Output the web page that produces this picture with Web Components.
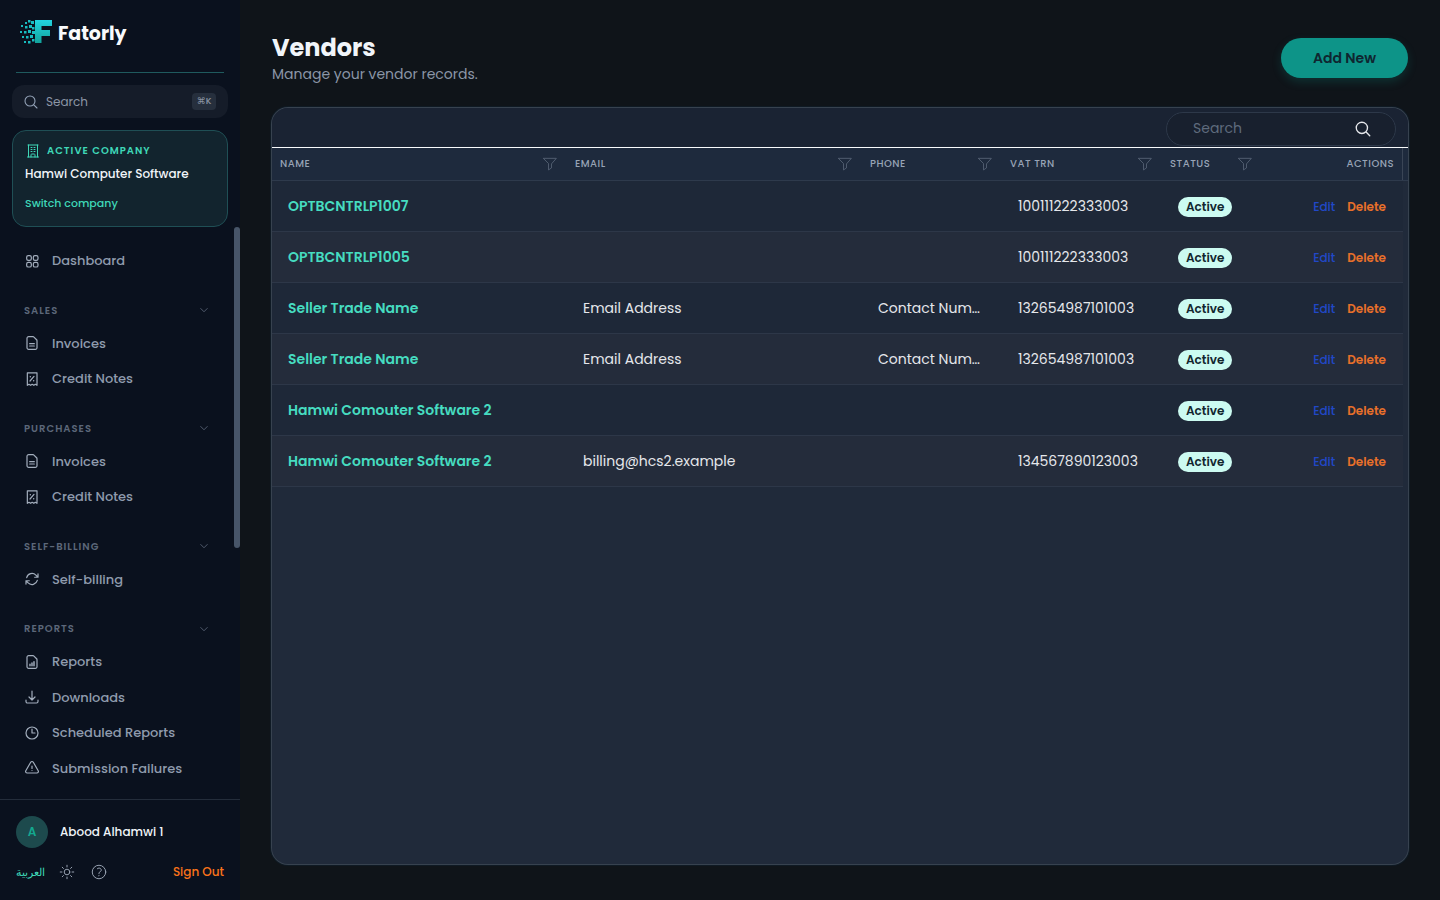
<!doctype html><html lang="en"><head><meta charset="utf-8"><title>Vendors</title><style>
html,body{margin:0;height:100%;overflow:hidden;background:#0f1419}
body{font-family:"Poppins","Noto Sans",sans-serif;color:#e5e7eb}
</style></head><body>
<fa-app>
  <fa-sidebar slot="sidebar"></fa-sidebar>
  <fa-page-header slot="main" title="Vendors" subtitle="Manage your vendor records." action="Add New"></fa-page-header>
  <fa-vendor-table slot="main"></fa-vendor-table>
</fa-app>
<script>
const IC={
 grid:'<rect x="4" y="4" width="7" height="7" rx="2.4"/><rect x="14" y="4" width="7" height="7" rx="2.4"/><rect x="4" y="14" width="7" height="7" rx="2.4"/><rect x="14" y="14" width="7" height="7" rx="2.4"/>',
 doc:'<path d="M7 2.5h6.5a2 2 0 0 1 1.4.6l4 4a2 2 0 0 1 .6 1.4V19a2.5 2.5 0 0 1-2.5 2.5H7A2.5 2.5 0 0 1 4.500 19V5A2.500 2.500 0 0 1 7 2.500z"/><path d="M8.500 13h7M8.500 16.500h7"/>',
 receipt:'<path d="M5 2.800h14.500V21.500l-2.400-1.600-2.400 1.600-2.400-1.600-2.400 1.600-2.400-1.600L5 21.500z"/><path d="M9 15l6-7"/><path d="M9.500 8.500h.01M14.500 14.500h.01" stroke-width="2.200"/>',
 sync:'<path d="M16.023 9.348h4.992v-.001M2.985 19.644v-4.992m0 0h4.992m-4.993 0l3.181 3.183a8.25 8.25 0 0013.803-3.7M4.031 9.865a8.25 8.25 0 0113.803-3.7l3.181 3.182m0-4.991v4.99"/>',
 report:'<path d="M7 2.500h6.500a2 2 0 0 1 1.400.6l4 4a2 2 0 0 1 .6 1.400V19a2.500 2.500 0 0 1-2.500 2.500H7A2.500 2.500 0 0 1 4.500 19V5A2.500 2.500 0 0 1 7 2.500z"/><path d="M9 17.500l0-2M12 17.500v-4M15 17.500v-6" stroke-width="2.200"/>',
 down:'<path d="M3 16.500v2.250A2.250 2.250 0 005.250 21h13.500A2.250 2.250 0 0021 18.750V16.500M16.500 12L12 16.500m0 0L7.500 12m4.500 4.500V3"/>',
 clock:'<path d="M12 6v6h4.500m4.500 0a9 9 0 11-18 0 9 9 0 0118 0z"/>',
 warn:'<path d="M12 9v3.750m-9.303 3.376c-.866 1.500.217 3.374 1.948 3.374h14.710c1.730 0 2.813-1.874 1.948-3.374L13.949 3.378c-.866-1.500-3.032-1.500-3.898 0L2.697 16.126zM12 15.750h.007v.008H12v-.008z"/>',
 building:'<path d="M3.750 21h16.500M4.500 3h15M5.250 3v18m13.500-18v18M9 6.750h1.500m-1.500 3h1.500m-1.500 3h1.500m3-6H15m-1.500 3H15m-1.500 3H15M9 21v-3.375c0-.621.504-1.125 1.125-1.125h3.750c.621 0 1.125.504 1.125 1.125V21"/>',
 sun:'<path d="M12 3v2.250m6.364.386l-1.591 1.591M21 12h-2.250m-.386 6.364l-1.591-1.591M12 18.750V21m-4.773-4.227l-1.591 1.591M5.250 12H3m4.227-4.773L5.636 5.636M15.750 12a3.750 3.750 0 11-7.500 0 3.750 3.750 0 017.500 0z"/>',
 help:'<path d="M9.879 7.519c1.171-1.025 3.071-1.025 4.242 0 1.172 1.025 1.172 2.687 0 3.712-.203.179-.43.326-.67.442-.745.361-1.450.999-1.450 1.827v.750M21 12a9 9 0 11-18 0 9 9 0 0118 0zm-9 5.250h.008v.008H12v-.008z"/>',
 search:'<path d="M21 21l-5.197-5.197m0 0A7.500 7.500 0 105.196 5.196a7.500 7.500 0 0010.607 10.607z"/>',
 funnel:'<path d="M2.500 3.500h19l-7.300 8.400v6l-4.400 3v-9z"/>',
 chev:'<path d="M5.500 9l6.500 6.500L18.500 9"/>'
};
function icon(n,s,w,c){return `<svg width="${s}" height="${s}" viewBox="0 0 24 24" fill="none" stroke="${c||'currentColor'}" stroke-width="${w||1.5}" stroke-linecap="round" stroke-linejoin="round" style="display:block;flex:none">${IC[n]}</svg>`}
class Base extends HTMLElement{render(h){(this.shadowRoot||this.attachShadow({mode:'open'})).innerHTML=h}}

class FaApp extends Base{connectedCallback(){this.render(`<style>
:host{display:flex;width:1440px;height:900px;background:#0f1419}
.m{flex:1;min-width:0;display:flex;flex-direction:column;padding:32px 32px 36px}
</style><slot name="sidebar"></slot><div class="m"><slot name="main"></slot></div>`)}}

class FaLogo extends Base{connectedCallback(){
 const dots=[[28,20,2.500],[25,22,2],[31,21,3],[21,25,2],[25,26,2.500],[29,25,3],[32,27,2.500],[20,31,2],[24,31,2.500],[28,30,3],[32,31,3],[22,36,2],[26,36,2.500],[30,35,3],[24,41,2],[28,41,2.500],[32,39,2.500]];
 this.render(`<style>:host{display:flex;align-items:center;height:46px}
 svg{display:block;flex:none}span{font-size:19px;font-weight:700;color:#f8fafc;line-height:30px;margin-left:-2px;position:relative;top:1px;letter-spacing:-.05px}</style>
 <svg width="44" height="46" viewBox="16 10 44 46"><defs><linearGradient id="g" x1="0" y1="0" x2="0" y2="1"><stop offset="0" stop-color="#22d3e0"/><stop offset="1" stop-color="#12a39c"/></linearGradient></defs>
 ${dots.map(d=>`<rect x="${d[0]}" y="${d[1]}" width="${d[2]}" height="${d[2]}" fill="#18bcc0"/>`).join('')}
 <path d="M35 20h17v6H41.500v4H50v6h-8.500v7H35z" fill="url(#g)"/></svg><span>Fatorly</span>`)}}

class FaSideSearch extends Base{connectedCallback(){this.render(`<style>
:host{display:flex;align-items:center;height:33px;margin:0 12px;padding:0 12px 0 11px;border-radius:12px;background:#151c29;color:#94a3b8;box-sizing:border-box}
span{font-size:12px;margin-left:7px;flex:1;color:#8b95a5}
kbd{font:500 9px "Poppins","DejaVu Sans",sans-serif;background:#262f3d;color:#8b95a5;border-radius:4px;width:24px;height:17px;display:flex;align-items:center;justify-content:center}
</style>${icon('search',16,1.600)}<span>Search</span><kbd>⌘K</kbd>`)}}

class FaCompany extends Base{connectedCallback(){this.render(`<style>
:host{display:block;margin:12px 12px 0;height:97px;box-sizing:border-box;padding:12px 12px 0;border:1px solid #1f4f55;border-radius:14px;background:#12242e}
.l{display:flex;align-items:center;gap:6px;color:#3fd8b8;font-size:10px;font-weight:600;letter-spacing:1px;line-height:16px}
.n{font-size:12px;font-weight:500;color:#f1f5f9;line-height:18px;margin-top:6px}
.s{font-size:11px;font-weight:500;color:#3fd8b8;line-height:16px;margin-top:12px}
</style><div class="l">${icon('building',16,1.500)}ACTIVE COMPANY</div><div class="n">Hamwi Computer Software</div><div class="s">Switch company</div>`)}}

class FaNavItem extends Base{connectedCallback(){this.render(`<style>
:host{display:flex;align-items:center;height:35.500px;padding-left:24px;gap:12px;font-size:13px;font-weight:500;color:#8f9bad}
svg{color:#a3aebd}
span{position:relative;top:.5px}
</style>${icon(this.getAttribute('icon'),16,1.800)}<span><slot></slot></span>`)}}

class FaNavSection extends Base{connectedCallback(){this.render(`<style>
:host{display:block;margin-top:16.500px}
.h{display:flex;align-items:center;justify-content:space-between;height:30.500px;padding:0 30px 0 24px;font-size:10px;font-weight:600;letter-spacing:1px;color:#5c6779}
.h span{position:relative;top:.5px}
svg{color:#677285}
</style><div class="h"><span>${this.getAttribute('label')}</span>${icon('chev',12,1.500)}</div><slot></slot>`)}}

class FaSidebar extends Base{connectedCallback(){this.render(`<style>
:host{display:flex;flex-direction:column;width:240px;height:900px;flex:none;background:#0a111e;box-sizing:border-box}
.top{padding:10px 0 0 16px;height:36px}
.rule{height:1px;background:#1f5a5e;margin:26px 16px 12px}
.nav{flex:1;min-height:0;position:relative;padding-top:16px;overflow:hidden}
.thumb{position:absolute;right:0;top:0;width:6px;height:321px;border-radius:3px;background:#475569}
.foot{flex:none;height:101px;border-top:1px solid #242d3b;box-sizing:border-box;padding:16px 16px 0}
.u{display:flex;align-items:center;gap:12px;font-size:12px;font-weight:500;color:#f1f5f9}
.a{width:32px;height:32px;border-radius:50%;background:#1d4a4d;color:#14a88f;display:flex;align-items:center;justify-content:center;font-size:12px;font-weight:600}
.b{display:flex;align-items:center;margin-top:12px;height:24px;font-size:12px}
.ar{color:#3fd8b8;font-size:11.300px;font-weight:500;width:42px}
.ic{display:flex;gap:14px;color:#9aa5b4;flex:1}
.so{color:#f9731a;font-weight:500}
</style>
<div class="top"><fa-logo></fa-logo></div><div class="rule"></div>
<fa-side-search></fa-side-search><fa-company></fa-company>
<div class="nav"><div class="thumb"></div>
<fa-nav-item icon="grid">Dashboard</fa-nav-item>
<fa-nav-section label="SALES"><fa-nav-item icon="doc">Invoices</fa-nav-item><fa-nav-item icon="receipt">Credit Notes</fa-nav-item></fa-nav-section>
<fa-nav-section label="PURCHASES"><fa-nav-item icon="doc">Invoices</fa-nav-item><fa-nav-item icon="receipt">Credit Notes</fa-nav-item></fa-nav-section>
<fa-nav-section label="SELF-BILLING"><fa-nav-item icon="sync">Self-billing</fa-nav-item></fa-nav-section>
<fa-nav-section label="REPORTS"><fa-nav-item icon="report">Reports</fa-nav-item><fa-nav-item icon="down">Downloads</fa-nav-item><fa-nav-item icon="clock">Scheduled Reports</fa-nav-item><fa-nav-item icon="warn">Submission Failures</fa-nav-item></fa-nav-section>
</div>
<div class="foot"><div class="u"><div class="a">A</div><span>Abood Alhamwi 1</span></div>
<div class="b"><span class="ar" lang="ar">العربية</span><div class="ic">${icon('sun',18,1.300)}${icon('help',18,1.300)}</div><span class="so">Sign Out</span></div></div>`)}}

class FaPageHeader extends Base{connectedCallback(){this.render(`<style>
:host{display:flex;align-items:center;justify-content:space-between;height:52px;flex:none;margin-bottom:24px}
h1{margin:0;font-size:24px;line-height:32px;font-weight:700;color:#f1f5f9}
p{margin:0;font-size:14px;line-height:20px;color:#8b96a7}
button{font:600 14px "Poppins",sans-serif;height:40px;width:127px;border:0;border-radius:20px;background:#0d9488;color:#0f2630;box-shadow:0 4px 10px rgba(13,148,136,.22)}
</style><div><h1>${this.getAttribute('title')}</h1><p>${this.getAttribute('subtitle')}</p></div><button>${this.getAttribute('action')}</button>`)}}

class FaBadge extends Base{connectedCallback(){this.render(`<style>
:host{display:inline-flex;align-items:center;height:20px;padding:0 8px;border-radius:10px;background:#ccfbf1;color:#11262e;font-size:12px;font-weight:600;line-height:20px}
</style><slot></slot>`)}}

const COLS='295px 295px 140px 160px 100px 141px';
class FaVendorRow extends Base{connectedCallback(){const g=a=>this.getAttribute(a)||'';this.render(`<style>
:host{display:grid;grid-template-columns:${COLS};height:51px;box-sizing:border-box;border-bottom:1px solid #2d3748;font-size:14px;color:#e5e7eb;background:#1e2838}
:host([alt]){background:#242c3b}
.c{padding:0 16px;display:flex;align-items:center;min-width:0}
.t{white-space:nowrap;display:block;min-width:0}
.n{font-weight:600;color:#46dcc0}
.s{padding-top:1px}
.x{justify-content:flex-end;gap:12px;padding:1px 17px 0 0;font-size:12px;font-weight:500}
.e{color:#2148c8}.d{color:#e8702a;font-weight:600}
</style><div class="c n"><span class="t">${g('name')}</span></div><div class="c"><span class="t">${g('email')}</span></div><div class="c"><span class="t">${g('phone')}</span></div><div class="c"><span class="t">${g('vat')}</span></div><div class="c s"><fa-badge>Active</fa-badge></div><div class="c x"><span class="e">Edit</span><span class="d">Delete</span></div>`)}}

class FaHeadCell extends Base{connectedCallback(){this.render(`<style>
:host{display:flex;align-items:center;justify-content:space-between;padding:0 9px 0 8px;font-size:10px;font-weight:500;letter-spacing:.5px;color:#98a4b6;min-width:0}
svg{color:#5d697c}
</style><span><slot></slot></span>${icon('funnel',16,1.200)}`)}}

class FaVendorTable extends Base{connectedCallback(){
 const R=[['OPTBCNTRLP1007','','','100111222333003'],['OPTBCNTRLP1005','','','100111222333003'],['Seller Trade Name','Email Address','Contact Num…','132654987101003'],['Seller Trade Name','Email Address','Contact Num…','132654987101003'],['Hamwi Comouter Software 2','','',''],['Hamwi Comouter Software 2','billing@hcs2.example','','134567890123003']];
 this.render(`<style>
:host{display:flex;flex-direction:column;flex:1;min-height:0;border-radius:16px;background:#202a3a;box-shadow:0 0 0 1px #37424f,0 0 0 2px #0f1a24;overflow:hidden}
.tb{flex:none;height:39px;background:#1a2333;display:flex;justify-content:flex-end;padding-right:12px;box-sizing:border-box}
.s{width:230px;height:34px;margin-top:4px;border:1px solid #2d3849;border-radius:17px;display:flex;align-items:center;justify-content:space-between;padding:0 23px 2px 26px;box-sizing:border-box;font-size:14px;color:#5f6b7d;background:#18202e}
.s svg{color:#e5e7eb;margin-top:2px}
.hr{flex:none;height:1px;background:#f8fafc}
.hd{flex:none;height:33px;background:#1e2a3d;border-bottom:1px solid #2e3a4c;box-sizing:border-box;padding-right:5px}
.g{display:grid;grid-template-columns:${COLS};height:100%}
.ac{display:flex;align-items:center;justify-content:flex-end;padding-right:8px;font-size:10px;font-weight:500;letter-spacing:.5px;color:#98a4b6;border-right:1px solid #3a4556}
.b{padding-right:5px}
</style><div class="tb"><div class="s"><span>Search</span>${icon('search',18,1.800)}</div></div><div class="hr"></div>
<div class="hd"><div class="g"><fa-head-cell>NAME</fa-head-cell><fa-head-cell>EMAIL</fa-head-cell><fa-head-cell>PHONE</fa-head-cell><fa-head-cell>VAT TRN</fa-head-cell><fa-head-cell>STATUS</fa-head-cell><div class="ac">ACTIONS</div></div></div>
<div class="b">${R.map((r,i)=>`<fa-vendor-row ${i%2?'alt':''} name="${r[0]}" email="${r[1]}" phone="${r[2]}" vat="${r[3]}"></fa-vendor-row>`).join('')}</div>`)}}

[['fa-app',FaApp],['fa-logo',FaLogo],['fa-side-search',FaSideSearch],['fa-company',FaCompany],['fa-nav-item',FaNavItem],['fa-nav-section',FaNavSection],['fa-sidebar',FaSidebar],['fa-page-header',FaPageHeader],['fa-badge',FaBadge],['fa-vendor-row',FaVendorRow],['fa-head-cell',FaHeadCell],['fa-vendor-table',FaVendorTable]].forEach(([n,c])=>customElements.define(n,c));
</script></body></html>
